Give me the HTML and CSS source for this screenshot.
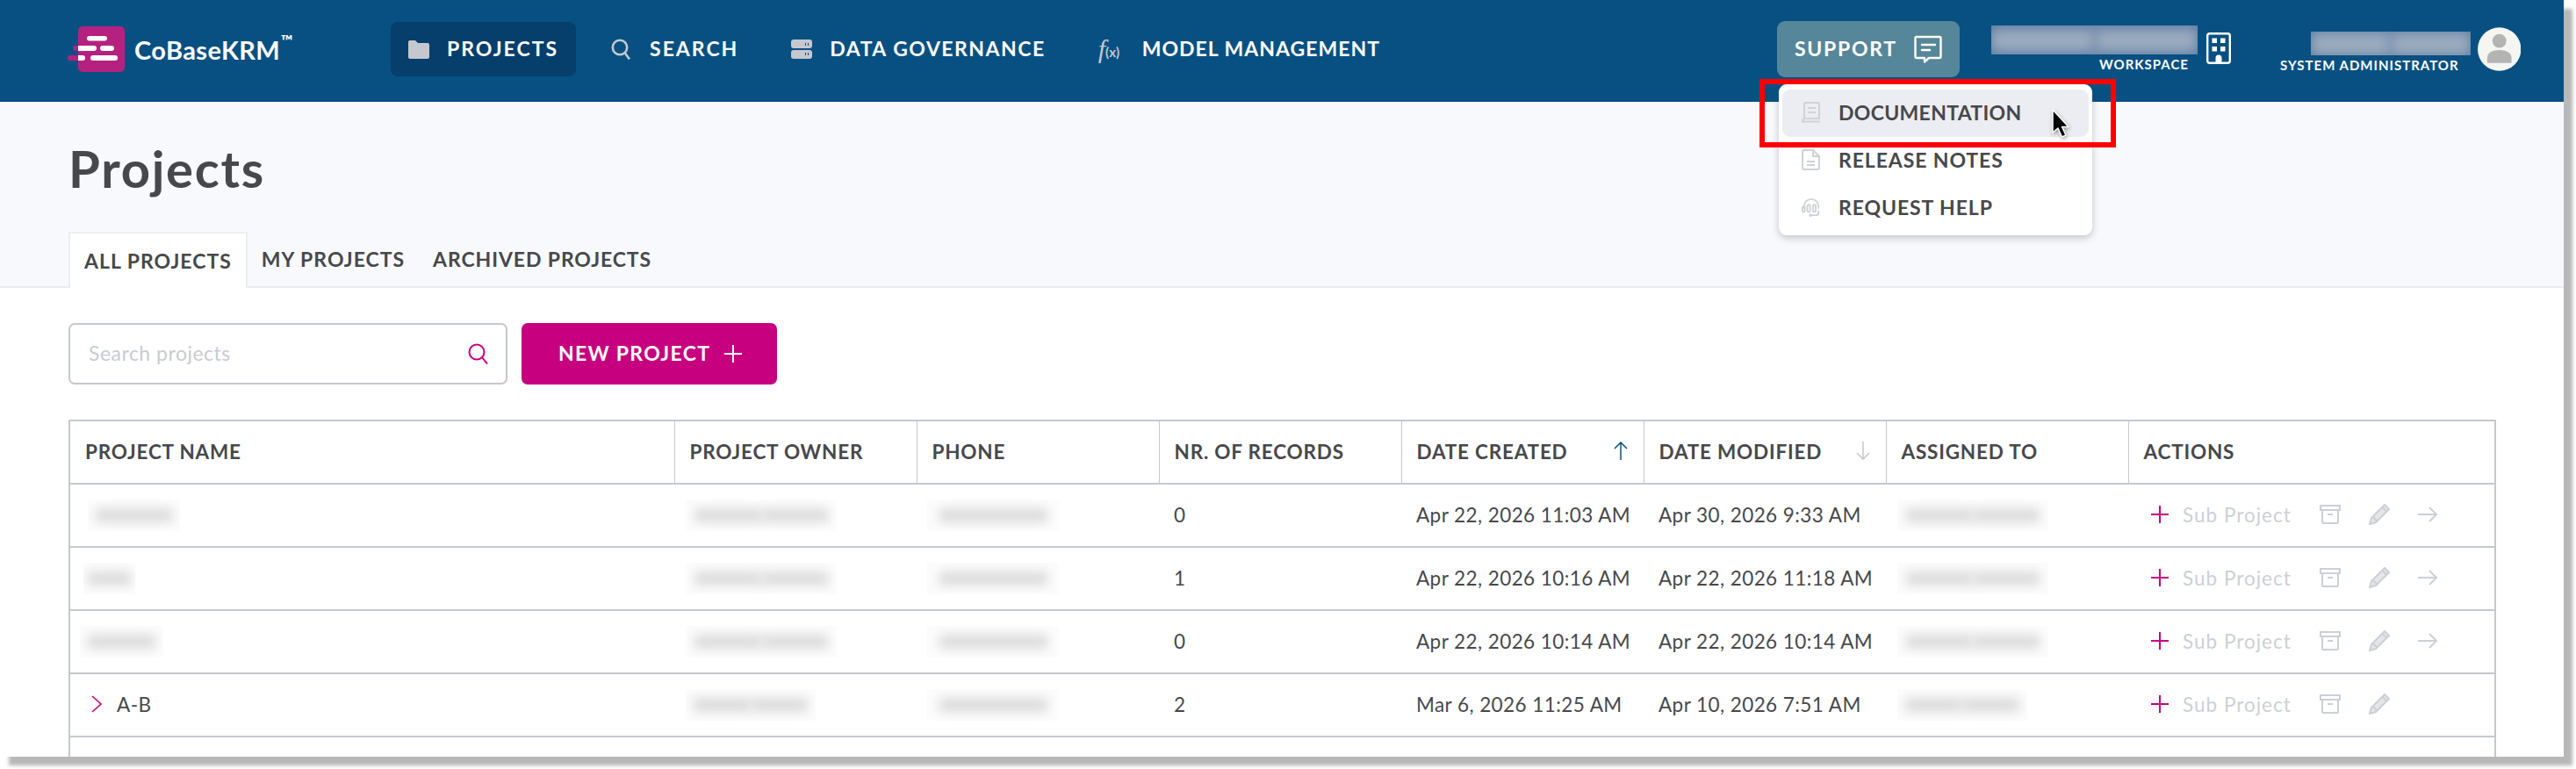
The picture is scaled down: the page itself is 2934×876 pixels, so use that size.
FILE: index.html
```html
<!DOCTYPE html>
<html lang="en">

<head>
    <meta charset="UTF-8">
    <title>Projects - CoBaseKRM</title>
    <link rel="stylesheet" href="styles.css">
</head>

<body>
    <div class="window">
        <header class="topbar">
            <a class="brand">
                <svg class="brand-mark" width="65" height="52" viewBox="0 0 65 52">
                    <rect x="12" y="0" width="53" height="52" rx="5" fill="#b5217f" />
                    <rect x="6" y="22" width="10" height="6" rx="3" fill="#b5217f" />
                    <rect x="0" y="33" width="16" height="6" rx="3" fill="#b5217f" />
                    <rect x="22" y="11" width="23" height="5.5" rx="2.7" fill="#fff" />
                    <path d="M12 22h18a3 3 0 0 1 0 6H12z" fill="#fff" />
                    <rect x="37" y="22" width="16" height="6" rx="3" fill="#fff" />
                    <path d="M12 33h5a3 3 0 0 1 0 6h-5z" fill="#fff" />
                    <rect x="26" y="33" width="31" height="6" rx="3" fill="#fff" />
                </svg>
                <span class="brand-name">CoBaseKRM<sup>™</sup></span>
            </a>
            <nav class="mainnav">
                <a class="navitem active">
                    <svg width="24" height="21" viewBox="0 0 24 21"><path d="M2 0h6l3 3h11a2 2 0 0 1 2 2v14a2 2 0 0 1-2 2H2a2 2 0 0 1-2-2V2a2 2 0 0 1 2-2z" fill="#c5c8ce" /></svg>
                    PROJECTS
                </a>
                <a class="navitem">
                    <svg width="24" height="24" viewBox="0 0 24 24" fill="none" stroke="#c5c8ce" stroke-width="2.6"><circle cx="10" cy="10" r="8.2" /><path d="M15.5 16l5.5 7.5" /></svg>
                    SEARCH
                </a>
                <a class="navitem">
                    <svg width="24" height="22" viewBox="0 0 24 22"><rect width="24" height="10" rx="3" fill="#c5c8ce" /><rect y="12" width="24" height="10" rx="3" fill="#c5c8ce" /><path d="M16 4h1v3h-1zM19 4h1v3h-1zM16 15h1v3h-1zM19 15h1v3h-1z" fill="#085082" /></svg>
                    DATA GOVERNANCE
                </a>
                <a class="navitem">
                    <span class="fx"><i>f</i><small>(x)</small></span>
                    MODEL MANAGEMENT
                </a>
            </nav>
            <div class="topright">
                <button class="support">
                    SUPPORT
                    <svg width="32" height="32" viewBox="0 0 32 32" fill="none" stroke="#fff" stroke-width="2.4" stroke-linejoin="round"><path d="M3 2h26a1.500 1.500 0 0 1 1.500 1.500v21a1.500 1.500 0 0 1-1.500 1.500H17l-5 4.500V26H3a1.500 1.500 0 0 1-1.500-1.500v-21A1.500 1.500 0 0 1 3 2z" /><path d="M9 11h15M9 17h9" stroke-linecap="round" /></svg>
                </button>
                <div class="workspace">
                    <div class="who">
                        <div class="smudge wide"><i></i><i></i></div>
                        <span class="role">WORKSPACE</span>
                    </div>
                    <svg width="28" height="36" viewBox="0 0 28 36"><rect x="1.200" y="1.200" width="25.600" height="33.600" rx="2.500" fill="none" stroke="#fff" stroke-width="2.400" /><path d="M6.500 6.500h5.500v5.500H6.500zM16 6.500h5.500v5.500H16zM6.500 16H12v5.500H6.500zM16 16h5.500v5.500H16zM10.500 34v-5a3.500 3.500 0 0 1 7 0v5z" fill="#fff" /></svg>
                </div>
                <div class="account">
                    <div class="who">
                        <div class="smudge"><i></i><i></i></div>
                        <span class="role">SYSTEM ADMINISTRATOR</span>
                    </div>
                    <svg class="avatar" width="50" height="50" viewBox="0 0 50 50"><circle cx="25" cy="25" r="25" fill="#f5f5f2" /><circle cx="25" cy="15.500" r="8" fill="#b4b4b4" /><path d="M11 41v-6c0-6 6-9 14-9s14 3 14 9v6z" fill="#b4b4b4" /></svg>
                </div>
            </div>
        </header>

        <!-- support dropdown, open -->
        <ul class="supportmenu">
            <li class="hover">
                <svg width="22" height="24" viewBox="0 0 22 24" fill="none" stroke="#cfd2d7" stroke-width="2"><path d="M3 19V3a2 2 0 0 1 2-2h13a2 2 0 0 1 2 2v16H4a3 3 0 0 0 0 6" /><path d="M2 22.500h19" /><path d="M7 7h9M7 12h9" /></svg>
                DOCUMENTATION
            </li>
            <li>
                <svg width="22" height="24" viewBox="0 0 22 24" fill="none" stroke="#cfd2d7" stroke-width="2"><path d="M3 1h10l7 7v13a2 2 0 0 1-2 2H3a2 2 0 0 1-2-2V3a2 2 0 0 1 2-2z" /><path d="M13 1v7h7M6 14h9M6 18h9" /></svg>
                RELEASE NOTES
            </li>
            <li>
                <svg width="24" height="24" viewBox="0 0 24 24" fill="none" stroke="#cfd2d7" stroke-width="2"><path d="M3 14v-3a9 9 0 0 1 18 0v3" /><rect x="1" y="11" width="3" height="7" rx="1.500" /><rect x="7" y="9" width="3.500" height="9" rx="1.700" /><rect x="14" y="9" width="3.500" height="9" rx="1.700" /><path d="M21 16v3a3 3 0 0 1-3 3h-6" /><circle cx="11" cy="22" r="1" /></svg>
                REQUEST HELP
            </li>
        </ul>
        <div class="callout"></div>
        <svg class="pointer" width="24" height="36" viewBox="0 0 24 36"><path d="M2 1v26l6-5 4.500 10 4.500-2-4.500-9.500H20z" fill="#000" stroke="#fff" stroke-width="1.500" stroke-linejoin="round" /></svg>

        <section class="pagehead">
            <h1>Projects</h1>
            <div class="tabs">
                <a class="tab active">ALL PROJECTS</a>
                <a class="tab">MY PROJECTS</a>
                <a class="tab">ARCHIVED PROJECTS</a>
            </div>
        </section>

        <main class="content">
            <div class="toolbar">
                <label class="searchbox">
                    <input placeholder="Search projects">
                    <svg width="24" height="24" viewBox="0 0 24 24" fill="none" stroke="#c6007e" stroke-width="2"><circle cx="10" cy="10" r="8.500" /><path d="M16 16l6 7.500" /></svg>
                </label>
                <button class="newproject">
                    NEW PROJECT
                    <svg width="20" height="20" viewBox="0 0 20 20" stroke="#fff" stroke-width="2"><path d="M10 0v20M0 10h20" /></svg>
                </button>
            </div>

            <table class="projects">
                <colgroup>
                    <col class="c-name">
                    <col class="c-std">
                    <col class="c-std">
                    <col class="c-std">
                    <col class="c-std">
                    <col class="c-std">
                    <col class="c-std">
                    <col class="c-actions">
                </colgroup>
                <thead>
                    <tr>
                        <th>PROJECT NAME</th>
                        <th>PROJECT OWNER</th>
                        <th>PHONE</th>
                        <th>NR. OF RECORDS</th>
                        <th class="sorted">DATE CREATED
                            <svg width="18" height="21" viewBox="0 0 18 21" fill="none" stroke="#085082" stroke-width="1.500"><path d="M9 21V1M2 8l7-7 7 7" /></svg>
                        </th>
                        <th class="sorted">DATE MODIFIED
                            <svg width="18" height="21" viewBox="0 0 18 21" fill="none" stroke="#c5c8ce" stroke-width="1.500"><path d="M9 0v20M2 13l7 7 7-7" /></svg>
                        </th>
                        <th>ASSIGNED TO</th>
                        <th>ACTIONS</th>
                    </tr>
                </thead>
                <tbody>
                    <tr>
                        <td><div class="blurred b-name1"><i></i></div></td>
                        <td><div class="blurred b-owner"><i></i><i></i></div></td>
                        <td><div class="blurred b-phone"><i></i></div></td>
                        <td>0</td>
                        <td>Apr 22, 2026 11:03 AM</td>
                        <td>Apr 30, 2026 9:33 AM</td>
                        <td><div class="blurred b-owner"><i></i><i></i></div></td>
                        <td>
                            <div class="actions">
                                <svg class="plus" width="20" height="20" viewBox="0 0 20 20"><path d="M10 0v20M0 10h20" /></svg>
                                <span class="subproject">Sub Project</span>
                                <svg class="ico archive" width="24" height="22" viewBox="0 0 24 22"><path d="M1 1h22v5H1zM3 6v14a1 1 0 0 0 1 1h16a1 1 0 0 0 1-1V6M9 11h6" /></svg>
                                <svg class="ico pencil" width="24" height="24" viewBox="0 0 24 24"><path d="M18 1l5 5L8 21l-7 2 2-7zM5 15l5 5M15.500 4l5 5" /></svg>
                                <svg class="ico arrow" width="22" height="18" viewBox="0 0 22 18"><path d="M0 9h21M13 1l8 8-8 8" /></svg>
                            </div>
                        </td>
                    </tr>
                    <tr>
                        <td><div class="blurred b-name2"><i></i></div></td>
                        <td><div class="blurred b-owner"><i></i><i></i></div></td>
                        <td><div class="blurred b-phone"><i></i></div></td>
                        <td>1</td>
                        <td>Apr 22, 2026 10:16 AM</td>
                        <td>Apr 22, 2026 11:18 AM</td>
                        <td><div class="blurred b-owner"><i></i><i></i></div></td>
                        <td>
                            <div class="actions">
                                <svg class="plus" width="20" height="20" viewBox="0 0 20 20"><path d="M10 0v20M0 10h20" /></svg>
                                <span class="subproject">Sub Project</span>
                                <svg class="ico archive" width="24" height="22" viewBox="0 0 24 22"><path d="M1 1h22v5H1zM3 6v14a1 1 0 0 0 1 1h16a1 1 0 0 0 1-1V6M9 11h6" /></svg>
                                <svg class="ico pencil" width="24" height="24" viewBox="0 0 24 24"><path d="M18 1l5 5L8 21l-7 2 2-7zM5 15l5 5M15.500 4l5 5" /></svg>
                                <svg class="ico arrow" width="22" height="18" viewBox="0 0 22 18"><path d="M0 9h21M13 1l8 8-8 8" /></svg>
                            </div>
                        </td>
                    </tr>
                    <tr>
                        <td><div class="blurred b-name3"><i></i></div></td>
                        <td><div class="blurred b-owner"><i></i><i></i></div></td>
                        <td><div class="blurred b-phone"><i></i></div></td>
                        <td>0</td>
                        <td>Apr 22, 2026 10:14 AM</td>
                        <td>Apr 22, 2026 10:14 AM</td>
                        <td><div class="blurred b-owner"><i></i><i></i></div></td>
                        <td>
                            <div class="actions">
                                <svg class="plus" width="20" height="20" viewBox="0 0 20 20"><path d="M10 0v20M0 10h20" /></svg>
                                <span class="subproject">Sub Project</span>
                                <svg class="ico archive" width="24" height="22" viewBox="0 0 24 22"><path d="M1 1h22v5H1zM3 6v14a1 1 0 0 0 1 1h16a1 1 0 0 0 1-1V6M9 11h6" /></svg>
                                <svg class="ico pencil" width="24" height="24" viewBox="0 0 24 24"><path d="M18 1l5 5L8 21l-7 2 2-7zM5 15l5 5M15.500 4l5 5" /></svg>
                                <svg class="ico arrow" width="22" height="18" viewBox="0 0 22 18"><path d="M0 9h21M13 1l8 8-8 8" /></svg>
                            </div>
                        </td>
                    </tr>
                    <tr>
                        <td>
                            <div class="expandable">
                                <svg width="12" height="20" viewBox="0 0 12 20" fill="none" stroke="#c6007e" stroke-width="1.600"><path d="M1 1l10 9-10 9" /></svg>
                                A-B
                            </div>
                        </td>
                        <td><div class="blurred b-owner short"><i></i><i></i></div></td>
                        <td><div class="blurred b-phone"><i></i></div></td>
                        <td>2</td>
                        <td>Mar 6, 2026 11:25 AM</td>
                        <td>Apr 10, 2026 7:51 AM</td>
                        <td><div class="blurred b-owner short"><i></i><i></i></div></td>
                        <td>
                            <div class="actions">
                                <svg class="plus" width="20" height="20" viewBox="0 0 20 20"><path d="M10 0v20M0 10h20" /></svg>
                                <span class="subproject">Sub Project</span>
                                <svg class="ico archive" width="24" height="22" viewBox="0 0 24 22"><path d="M1 1h22v5H1zM3 6v14a1 1 0 0 0 1 1h16a1 1 0 0 0 1-1V6M9 11h6" /></svg>
                                <svg class="ico pencil" width="24" height="24" viewBox="0 0 24 24"><path d="M18 1l5 5L8 21l-7 2 2-7zM5 15l5 5M15.500 4l5 5" /></svg>
                            </div>
                        </td>
                    </tr>
                    <tr>
                        <td></td>
                        <td></td>
                        <td></td>
                        <td></td>
                        <td></td>
                        <td></td>
                        <td></td>
                        <td></td>
                    </tr>
                </tbody>
            </table>
        </main>
    </div>
</body>

</html>
```
FILE: styles.css
```css
* {
    box-sizing: border-box;
}

html,
body {
    margin: 0;
    background: #fff;
    overflow: hidden;
}

body {
    width: 2934px;
    height: 876px;
    font-family: Lato, "Open Sans", sans-serif;
    color: #47484b;
}

.window {
    position: relative;
    width: 2920px;
    height: 862px;
    overflow: hidden;
    background: #fff;
}

/* the screenshot's drop shadow, offset to the bottom right */
body::before {
    content: "";
    position: absolute;
    top: 0;
    left: 0;
    width: 2920px;
    height: 862px;
    box-shadow: 10px 10px 4px #b8b8b8;
}

/* top bar */
.topbar {
    display: flex;
    align-items: flex-start;
    height: 116px;
    padding: 24px 49px 0 77px;
    background: #085082;
}

.brand {
    display: flex;
    align-items: center;
    gap: 11px;
    width: 368px;
    margin-top: 6px;
    color: #fff;
}

.brand-name {
    position: relative;
    font-size: 29px;
    font-weight: 700;
    letter-spacing: 0.4px;
}

.brand-name sup {
    position: absolute;
    top: -2px;
    left: 100%;
    margin-left: 1px;
    font-size: 18px;
    line-height: 1;
}

.mainnav {
    display: flex;
    gap: 20px;
    margin-top: 1px;
}

.navitem {
    display: flex;
    align-items: center;
    gap: 20px;
    height: 62px;
    padding: 0 20px 2px;
    border-radius: 8px;
    color: #fff;
    font-size: 23px;
    font-weight: 700;
    letter-spacing: 2px;
    white-space: nowrap;
}

.navitem svg,
.navitem .fx {
    margin-top: 2px;
}

.navitem:nth-child(3) {
    letter-spacing: 1.5px;
}

.navitem:nth-child(4) {
    letter-spacing: 1px;
}

.navitem.active {
    background: #063f6c;
}

.fx {
    display: flex;
    align-items: flex-end;
    width: 30px;
    color: #c5c8ce;
    font-family: "Liberation Serif", serif;
    font-weight: 400;
    letter-spacing: 0;
}

.fx i {
    font-size: 30px;
    line-height: 30px;
}

.fx small {
    font-size: 15px;
    line-height: 24px;
    font-family: Lato, sans-serif;
    font-weight: 700;
}

.topright {
    display: flex;
    align-items: flex-start;
    margin-left: auto;
}

.support {
    display: flex;
    align-items: center;
    justify-content: space-between;
    width: 208px;
    height: 64px;
    padding: 0 20px 2px;
    border: 0;
    border-radius: 9px;
    background: #568699;
    color: #fff;
    font: 700 23px Lato, sans-serif;
    letter-spacing: 1.7px;
}

.support svg {
    margin-top: 2px;
}

.workspace,
.account {
    display: flex;
    margin-top: 6px;
}

.workspace {
    align-items: center;
    gap: 10px;
    margin-left: 36px;
    width: 273px;
    height: 50px;
}

.account {
    align-items: flex-start;
    gap: 8px;
    margin-left: 56px;
    width: 274px;
}

.who {
    display: flex;
    flex-direction: column;
    align-items: flex-end;
}

.workspace .who {
    width: 235px;
}

.workspace .role {
    margin-right: 10px;
}

.account .who {
    width: 217px;
    padding-top: 6px;
}

.account .role {
    margin-right: 13px;
}

.role {
    margin-top: 3px;
    color: #fff;
    font-size: 15px;
    line-height: 16px;
    font-weight: 700;
    letter-spacing: 1px;
    white-space: nowrap;
}

.smudge {
    display: flex;
    justify-content: space-around;
    align-items: center;
    width: 182px;
    height: 27px;
    overflow: hidden;
    background: #55799f;
}

.smudge.wide {
    width: 235px;
    height: 33px;
}

.smudge i {
    display: block;
    width: 50%;
    height: 28px;
    background: #9cabbf;
    filter: blur(7px);
}

.avatar {
    margin-top: 1px;
}

/* support menu */
.supportmenu {
    position: absolute;
    top: 96px;
    left: 2026px;
    width: 357px;
    height: 172px;
    margin: 0;
    padding: 6px 4px;
    list-style: none;
    background: #fff;
    border-radius: 9px;
    box-shadow: 0 3px 9px rgba(70, 75, 90, 0.3);
    font-size: 23px;
    font-weight: 700;
    letter-spacing: 0.9px;
}

.supportmenu li {
    display: flex;
    align-items: center;
    gap: 20px;
    height: 54px;
    padding-left: 22px;
    padding-bottom: 2px;
    border-radius: 9px;
}

.supportmenu li svg {
    width: 22px;
}

.supportmenu li.hover {
    background: #ecedf2;
    letter-spacing: 0.3px;
}

.callout {
    position: absolute;
    top: 90px;
    left: 2004px;
    width: 406px;
    height: 78px;
    border: 6px solid #ff0000;
}

.pointer {
    position: absolute;
    top: 124px;
    left: 2336px;
    filter: drop-shadow(1px 2px 2px rgba(0, 0, 0, 0.35));
}

/* page heading and tabs */
.pagehead {
    height: 212px;
    padding: 43px 0 0 78px;
    background: #f8f9fc;
    border-bottom: 2px solid #ececf0;
}

.pagehead h1 {
    margin: 0;
    height: 105px;
    font-size: 58px;
    line-height: 66px;
    font-weight: 700;
    letter-spacing: 1.7px;
}

.tabs {
    display: flex;
    height: 64px;
}

.tab {
    display: flex;
    align-items: center;
    padding: 0 16px 2px;
    font-size: 23px;
    font-weight: 700;
    letter-spacing: 1px;
    white-space: nowrap;
}

.tab:last-child {
    letter-spacing: 0.9px;
}

.tab.active {
    background: #fff;
    border: solid #eeeef2;
    border-width: 2px 2px 0;
    padding: 0 16px;
}

/* toolbar */
.content {
    padding: 40px 0 0 78px;
}

.toolbar {
    display: flex;
    gap: 16px;
    height: 70px;
}

.searchbox {
    display: flex;
    align-items: center;
    justify-content: space-between;
    width: 500px;
    padding: 0 19px;
    border: 2px solid #c5c8ce;
    border-radius: 7px;
}

.searchbox input {
    width: 400px;
    margin-bottom: 2px;
    border: 0;
    outline: none;
    font: 400 23px Lato, sans-serif;
    letter-spacing: 0.5px;
}

.searchbox input::placeholder {
    color: #c8ccd2;
}

.newproject {
    display: flex;
    align-items: center;
    gap: 16px;
    width: 291px;
    padding: 0 0 2px 42px;
    border: 0;
    border-radius: 7px;
    background: #c6007e;
    color: #fff;
    font: 700 23px Lato, sans-serif;
    letter-spacing: 1.3px;
}

.newproject svg {
    margin-top: 2px;
}

/* projects table */
.projects {
    table-layout: fixed;
    width: 2763px;
    margin-top: 40px;
    border-collapse: collapse;
    font-size: 22.5px;
}

.c-name {
    width: 689px;
}

.c-std {
    width: 276px;
}

.c-actions {
    width: 418px;
}

.projects th,
.projects td {
    height: 72px;
    padding: 0 0 2px 17px;
    text-align: left;
    white-space: nowrap;
}

.projects th {
    border: 2px solid #c5c8ce;
    border-left-width: 1.5px;
    border-right-width: 1.5px;
    font-weight: 700;
    letter-spacing: 0.8px;
}

.projects th:first-child,
.projects td:first-child {
    border-left: 2px solid #c5c8ce;
}

.projects th:last-child,
.projects td:last-child {
    border-right: 2px solid #c5c8ce;
}

.projects td {
    border-bottom: 2px solid #c5c8ce;
    letter-spacing: 0.43px;
}

.projects th.sorted svg {
    float: right;
    margin: 2px 17px 0 0;
}

.expandable {
    display: flex;
    align-items: center;
    gap: 17px;
    padding-left: 7px;
}

/* redacted cells */
.blurred {
    display: flex;
    align-items: center;
    justify-content: center;
    width: 150px;
    height: 36px;
    margin-top: 2px;
    background: #fcfcfc;
    overflow: hidden;
}

.blurred i {
    display: block;
    width: 82%;
    height: 16px;
    background: #dcdcdc;
    filter: blur(6px);
}

.b-name1 {
    width: 105px;
    margin-left: 3px;
}

.b-name2 {
    width: 59px;
    margin-left: -2px;
}

.b-name3 {
    width: 95px;
    margin-left: -6px;
}

.b-owner {
    width: 172px;
    margin-left: -4px;
}

.b-owner i {
    width: 44%;
}

.b-owner.short {
    width: 148px;
}

.b-phone {
    margin-left: -5px;
}

/* row actions */
.actions {
    display: flex;
    align-items: center;
    padding-left: 9px;
}

.actions .plus {
    stroke: #c6007e;
    stroke-width: 2;
}

.subproject {
    margin: 0 32px 0 16px;
    color: #ccd0d6;
    letter-spacing: 1px;
}

.ico {
    fill: none;
    stroke: #ccd0d6;
    stroke-width: 2;
}

.pencil {
    margin-left: 32px;
    fill: #e4e6ea;
}

.arrow {
    margin-left: 32px;
}
```
